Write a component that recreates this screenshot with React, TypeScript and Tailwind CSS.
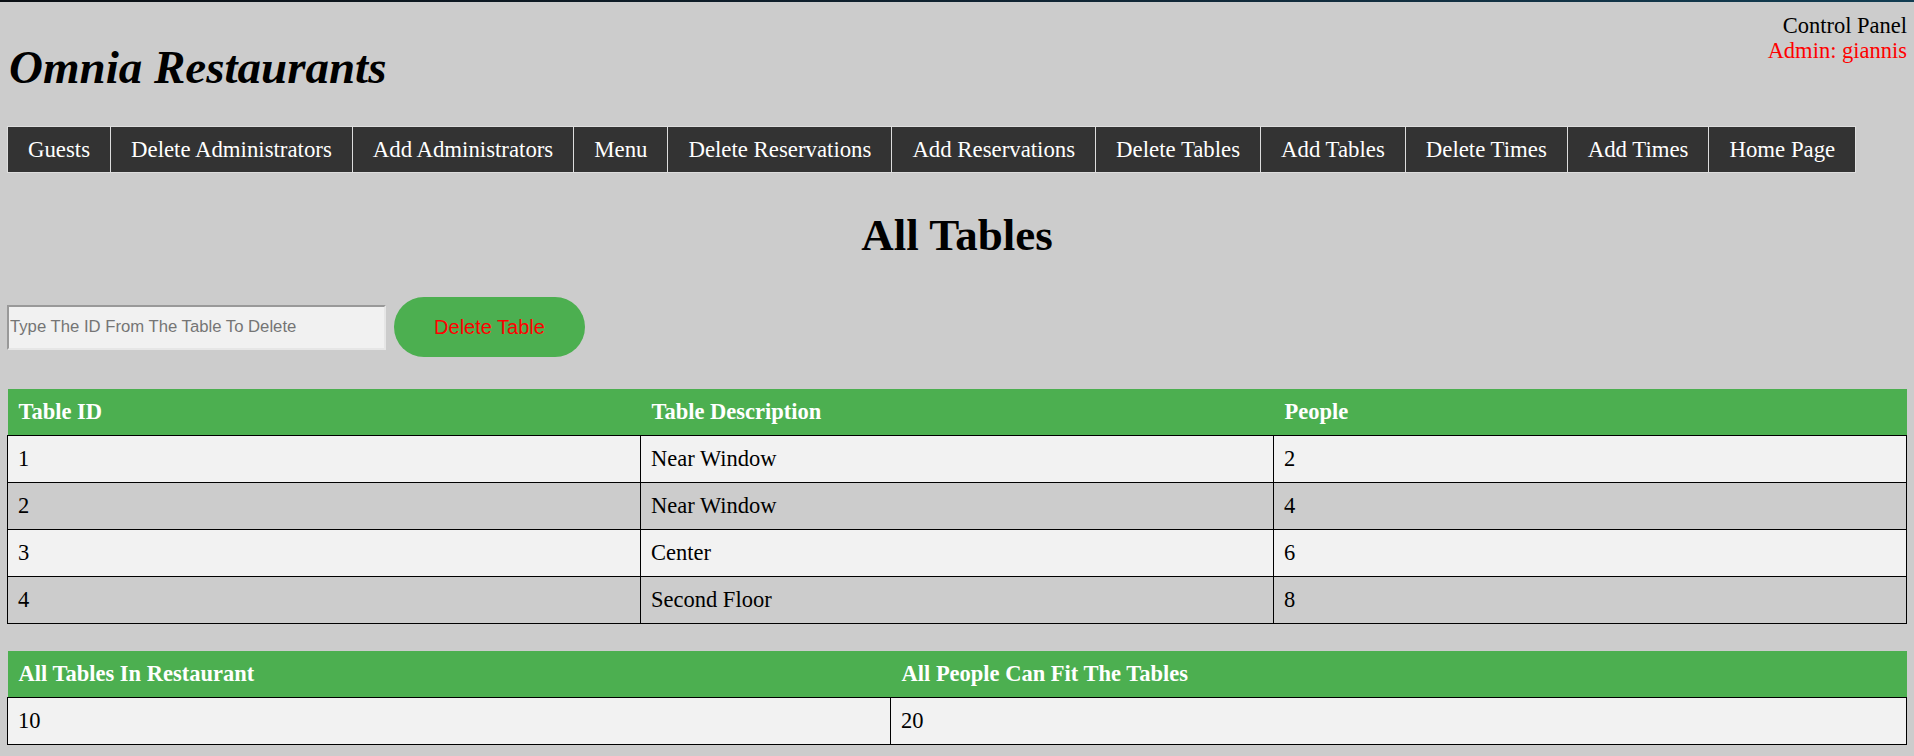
import React from 'react';

const navItems = [
  'Guests',
  'Delete Administrators',
  'Add Administrators',
  'Menu',
  'Delete Reservations',
  'Add Reservations',
  'Delete Tables',
  'Add Tables',
  'Delete Times',
  'Add Times',
  'Home Page',
];

const tables = [
  { id: '1', description: 'Near Window', people: '2' },
  { id: '2', description: 'Near Window', people: '4' },
  { id: '3', description: 'Center', people: '6' },
  { id: '4', description: 'Second Floor', people: '8' },
];

const serif = "font-['Liberation_Serif','Times_New_Roman',serif]";

const App: React.FC = () => {
  return (
    <div className={`min-h-[756px] bg-[#cccccc] text-[22.5px] text-black ${serif}`}>
      <div className="h-[2px] bg-linear-to-r from-[#0a0f14] via-[#0f2230] to-[#123d52]" />

      <div className="px-[7px]">
        {/* header */}
        <div className="flex items-start justify-between">
          <h1 className="mt-[38px] pl-[2px] text-[47px] leading-[54px] font-bold italic">Omnia Restaurants</h1>
          <div className="mt-[11px] text-right leading-[25px]">
            <p>Control Panel</p>
            <p className="text-[#ff0000]">Admin: giannis</p>
          </div>
        </div>

        {/* nav */}
        <nav className="mt-[32px] inline-flex gap-px bg-[#dddddd] p-px">
          {navItems.map((item) => (
            <a key={item} href="#" className="bg-[#333333] px-[20px] py-[10px] text-[22.8px] leading-[25px] text-white">
              {item}
            </a>
          ))}
        </nav>

        <h2 className="mt-[37px] text-center text-[45px] leading-[50px] font-bold">All Tables</h2>

        {/* delete form */}
        <form className="mt-[37px] flex items-center gap-[8px]" onSubmit={(e) => e.preventDefault()}>
          <input
            type="text"
            placeholder="Type The ID From The Table To Delete"
            className="h-[45px] w-[379px] border-2 border-t-[#999999] border-l-[#999999] border-r-[#e6e6e6] border-b-[#e6e6e6] bg-[#f1f1f1] pl-[1px] font-['Liberation_Sans',Arial,sans-serif] text-[16.7px] outline-none placeholder:text-[#757575]"
          />
          <button
            type="submit"
            className="h-[60px] w-[191px] rounded-full bg-[#4caf50] font-['Liberation_Sans',Arial,sans-serif] text-[20px] text-[#ff0000]"
          >
            Delete Table
          </button>
        </form>

        {/* tables list */}
        <table className="mt-[32px] w-full table-fixed border-collapse">
          <thead>
            <tr className="bg-[#4caf50] text-left text-white">
              <th className="px-[11px] py-[10px] leading-[26px] font-bold">Table ID</th>
              <th className="px-[11px] py-[10px] leading-[26px] font-bold">Table Description</th>
              <th className="px-[11px] py-[10px] leading-[26px] font-bold">People</th>
            </tr>
          </thead>
          <tbody>
            {tables.map((t, i) => (
              <tr key={t.id} className={i % 2 === 0 ? 'bg-[#f2f2f2]' : 'bg-[#cccccc]'}>
                <td className="border border-black px-[10px] py-[10px] leading-[26px]">{t.id}</td>
                <td className="border border-black px-[10px] py-[10px] leading-[26px]">{t.description}</td>
                <td className="border border-black px-[10px] py-[10px] leading-[26px]">{t.people}</td>
              </tr>
            ))}
          </tbody>
        </table>

        {/* totals */}
        <table className="mt-[27px] w-full table-fixed border-collapse">
          <colgroup>
            <col className="w-[883px]" />
            <col />
          </colgroup>
          <thead>
            <tr className="bg-[#4caf50] text-left text-white">
              <th className="px-[11px] py-[10px] leading-[26px] font-bold">All Tables In Restaurant</th>
              <th className="px-[11px] py-[10px] leading-[26px] font-bold">All People Can Fit The Tables</th>
            </tr>
          </thead>
          <tbody>
            <tr className="bg-[#f2f2f2]">
              <td className="border border-black px-[10px] py-[10px] leading-[26px]">10</td>
              <td className="border border-black px-[10px] py-[10px] leading-[26px]">20</td>
            </tr>
          </tbody>
        </table>
      </div>
    </div>
  );
};

export default App;
